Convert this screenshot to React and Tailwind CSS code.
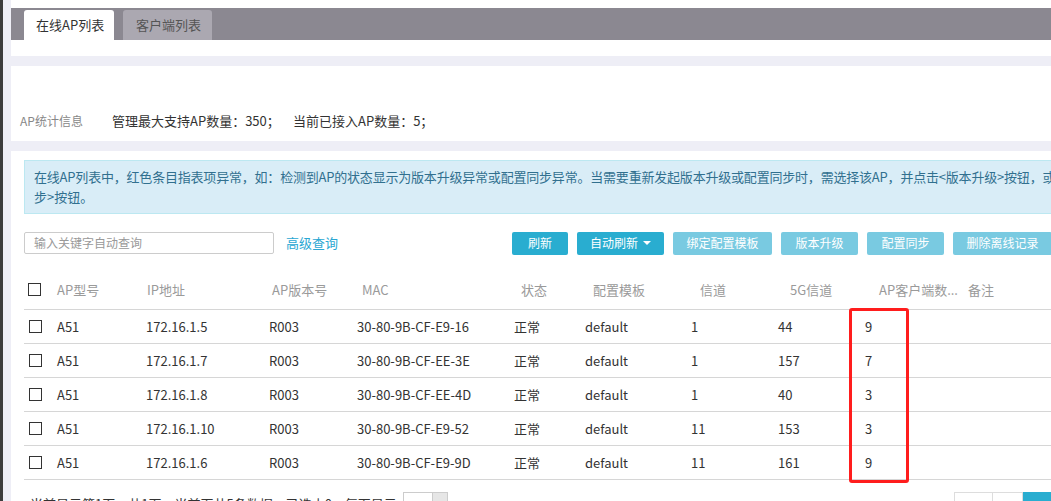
import React from "react";

const rows = [
  { ip: "172.16.1.5", mac: "30-80-9B-CF-E9-16", ch: "1", ch5: "44", n: "9" },
  { ip: "172.16.1.7", mac: "30-80-9B-CF-EE-3E", ch: "1", ch5: "157", n: "7" },
  { ip: "172.16.1.8", mac: "30-80-9B-CF-EE-4D", ch: "1", ch5: "40", n: "3" },
  { ip: "172.16.1.10", mac: "30-80-9B-CF-E9-52", ch: "11", ch5: "153", n: "3" },
  { ip: "172.16.1.6", mac: "30-80-9B-CF-E9-9D", ch: "11", ch5: "161", n: "9" },
];

const cols = "grid grid-cols-[33px_89px_123px_88px_157px_71px_106px_87px_87px_95px_1fr] items-center";

const Checkbox = () => (
  <div className="w-[13px] h-[13px] border border-[#333] bg-white" />
);

const Btn = ({ children, light, w }) => (
  <div
    className={`${w} h-[23px] rounded-[2px] flex items-center justify-center text-[12px] text-white ${
      light ? "bg-[#79cae1]" : "bg-[#29add0]"
    }`}
  >
    {children}
  </div>
);

export default function App() {
  return (
    <div className="w-[1051px] h-[501px] overflow-hidden flex items-start bg-[#eeeef6] font-['Microsoft_YaHei','Noto_Sans_CJK_SC',sans-serif] text-[#333]">
      <div className="w-[3px] h-[501px] shrink-0 bg-[#3c3c3c]" />
      <div className="ml-[8px] w-[1100px] shrink-0 flex flex-col">
        <div className="h-[8px] shrink-0 bg-white" />

        {/* Tabs */}
        <div className="h-[32px] shrink-0 bg-[#8b8891] flex items-end pl-[13px] gap-[9px]">
          <div className="w-[90px] h-[30px] bg-white rounded-t-[3px] flex items-center pl-[12px] text-[13px] text-[#333]">
            在线AP列表
          </div>
          <div className="w-[89px] h-[30px] bg-[#aba8b1] rounded-t-[3px] flex items-center pl-[13px] text-[13px] text-[#555]">
            客户端列表
          </div>
        </div>
        <div className="h-[16px] shrink-0 bg-white" />
        <div className="h-[10px] shrink-0" />

        {/* Stats */}
        <div className="h-[75px] shrink-0 bg-white pt-[45px] pl-[9px] flex items-start">
          <div className="h-[20px] flex items-center">
            <span className="text-[12px] text-[#888] w-[92px]">AP统计信息</span>
            <span className="text-[13px] text-[#333] w-[181px]">管理最大支持AP数量：350；</span>
            <span className="text-[13px] text-[#333]">当前已接入AP数量：5；</span>
          </div>
        </div>
        <div className="h-[10px] shrink-0" />

        {/* Main panel */}
        <div className="shrink-0 h-[360px] bg-white pl-[13px] pt-[9px] flex flex-col">
          <div className="w-[1090px] shrink-0 border border-[#bce8f1] bg-[#d9edf7] pl-[9px] pt-[6px] pb-[6px] text-[13px] leading-[20px] text-[#31708f]">
            <div className="whitespace-nowrap tracking-[-0.2px]">
              在线AP列表中，红色条目指表项异常，如：检测到AP的状态显示为版本升级异常或配置同步异常。当需要重新发起版本升级或配置同步时，需选择该AP，并点击&lt;版本升级&gt;按钮，或&lt;配置同
            </div>
            <div>步&gt;按钮。</div>
          </div>

          {/* Toolbar */}
          <div className="mt-[17px] h-[24px] shrink-0 flex items-center">
            <div className="w-[488px] flex items-center">
              <div className="w-[250px] h-[22px] border border-[#ccc] rounded-[2px] flex items-center pl-[9px] text-[12px] text-[#999]">
                输入关键字自动查询
              </div>
              <span className="ml-[12px] text-[13px] text-[#2aa7d3]">高级查询</span>
            </div>
            <div className="flex gap-[9px]">
              <Btn w="w-[56px]">刷新</Btn>
              <Btn w="w-[87px]">
                <span>自动刷新</span>
                <span className="ml-[5px] inline-block w-0 h-0 border-x-[4px] border-x-transparent border-t-[4px] border-t-white" />
              </Btn>
              <Btn w="w-[99px]" light>绑定配置模板</Btn>
              <Btn w="w-[77px]" light>版本升级</Btn>
              <Btn w="w-[77px]" light>配置同步</Btn>
              <Btn w="w-[99px]" light>删除离线记录</Btn>
            </div>
          </div>

          {/* Table */}
          <div className="relative shrink-0 mt-[19px] w-[1087px]">
            <div className={`${cols} h-[36px] pb-[4px] border-b border-[#d6d6d6] text-[13px] text-[#9a9a9a]`}>
              <div className="pl-[4px]"><Checkbox /></div>
              <div>AP型号</div>
              <div className="pl-[1px]">IP地址</div>
              <div className="pl-[3px]">AP版本号</div>
              <div className="pl-[5px]">MAC</div>
              <div className="pl-[7px]">状态</div>
              <div className="pl-[8px]">配置模板</div>
              <div className="pl-[9px]">信道</div>
              <div className="pl-[12px]">5G信道</div>
              <div className="pl-[14px] whitespace-nowrap">AP客户端数...</div>
              <div className="pl-[8px]">备注</div>
            </div>
            {rows.map((r) => (
              <div key={r.ip} className={`${cols} h-[34px] border-b border-[#d6d6d6] text-[13px] text-[#333]`}>
                <div className="pl-[5px]"><Checkbox /></div>
                <div>A51</div>
                <div>{r.ip}</div>
                <div>R003</div>
                <div>{r.mac}</div>
                <div>正常</div>
                <div>default</div>
                <div>{r.ch}</div>
                <div>{r.ch5}</div>
                <div>{r.n}</div>
                <div />
              </div>
            ))}
            {/* annotation */}
            <div className="absolute left-[825px] top-[34px] w-[60px] h-[175px] border-[3px] border-[#ff1d1d] rounded-[3px]" />
          </div>

          {/* Footer */}
          <div className="mt-[10px] h-[28px] shrink-0 flex items-start">
            <div className="pl-[6px] w-[379px] h-[28px] flex items-center text-[13px] text-[#333] whitespace-nowrap">
              当前显示第1页，共1页，当前页共5条数据，已选中0，每页显示
            </div>
            <div className="mt-[2px] w-[45px] h-[26px] border border-[#ccc] flex">
              <div className="w-[28px] flex items-center justify-center text-[12px]">10</div>
              <div className="flex-1 bg-[#e6e6e6] border-l border-[#ccc]" />
            </div>
            <div className="mt-[2px] ml-[506px] flex h-[28px]">
              <div className="w-[39px] border border-[#ddd] bg-white" />
              <div className="w-[30px] border border-l-0 border-[#ddd] bg-white" />
              <div className="w-[40px] bg-[#29add0]" />
            </div>
          </div>
        </div>
      </div>
    </div>
  );
}
